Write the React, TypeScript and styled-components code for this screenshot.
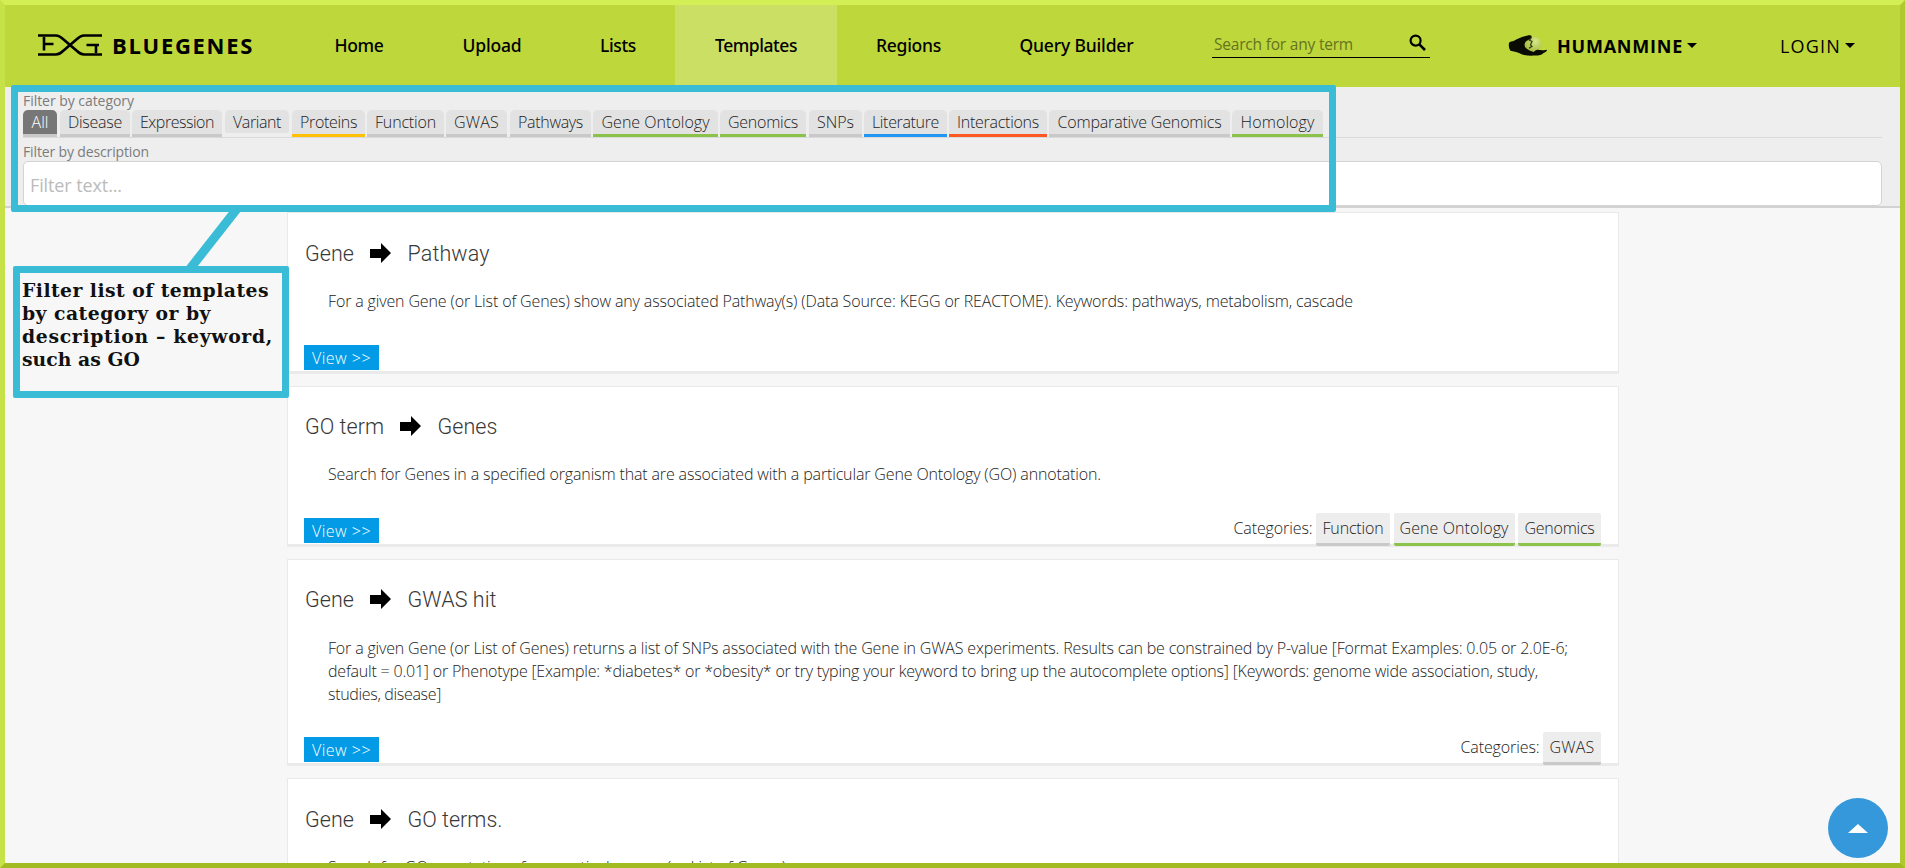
import React, { useLayoutEffect, useRef, useState } from "react";
import styled, { createGlobalStyle } from "styled-components";

const SANS = '"Open Sans", "Noto Sans", sans-serif';
const MEDIUM = '"Noto Sans", "Open Sans", sans-serif';

const GlobalStyle = createGlobalStyle`
  * { box-sizing: border-box; }
  body { margin: 0; font-family: ${SANS}; font-weight: 300; font-size: 16px; color: #222; }
`;

/* Spreads its letters so that the line takes exactly the given width. */
const FitSpan = styled.span`
  display: inline-block;
  white-space: pre;
`;

function Fit({ text, width }: { text: string; width: number }) {
  const ref = useRef<HTMLSpanElement>(null);
  const [spacing, setSpacing] = useState(0);
  useLayoutEffect(() => {
    if (!ref.current) return;
    const natural = ref.current.getBoundingClientRect().width - spacing * text.length;
    setSpacing((width - natural) / text.length);
  }, [text, width]);
  return (
    <FitSpan ref={ref} style={{ letterSpacing: spacing }}>
      {text}
    </FitSpan>
  );
}

const Page = styled.div`
  position: relative;
  width: 1905px;
  height: 868px;
  overflow: hidden;
  display: flex;
  flex-direction: column;
  background: #f7f7f7;
  border: 5px solid;
  border-color: #d4ef55 #afc92f #a2bb22 #c6e248;
`;

const Header = styled.header`
  flex: none;
  display: flex;
  align-items: flex-start;
  height: 82px;
  background: #bed73b;
  color: #000;
`;

const Brand = styled.div`
  display: flex;
  align-items: center;
  width: 290px;
  height: 79px;
  padding-left: 32px;
  font-size: 22px;
  font-weight: 700;
`;

const BrandLogo = styled.svg`
  width: 66px;
  height: 24px;
  margin: 1px 9px 0 0;
`;

const Nav = styled.nav`
  display: flex;
`;

const NavItem = styled.a<{ $width: number; $active?: boolean }>`
  display: flex;
  align-items: center;
  justify-content: center;
  width: ${(p) => p.$width}px;
  height: 80px;
  font-family: ${MEDIUM};
  font-size: 17.5px;
  font-weight: 500;
  background: ${(p) => (p.$active ? "#cbdf64" : "transparent")};
`;

const SearchBox = styled.div`
  display: flex;
  align-items: center;
  justify-content: space-between;
  width: 218px;
  height: 30px;
  margin: 23px 0 0 39px;
  padding: 3px 3px 0 2px;
  border-bottom: 1px solid #000;
  font-weight: 400;
  font-size: 15.5px;
  color: #65731f;
`;

const SearchIcon = styled.svg`
  width: 18px;
  height: 18px;
  margin-bottom: 3px;
`;

const MineMenu = styled.div`
  display: flex;
  align-items: center;
  height: 82px;
  margin-left: 78px;
  font-size: 18px;
  font-weight: 700;
`;

const HandLogo = styled.svg`
  width: 40px;
  height: 24px;
  margin-right: 9px;
`;

const LoginMenu = styled(MineMenu)`
  margin-left: 83px;
  font-weight: 400;
`;

const Caret = styled.i`
  margin: 0 0 2px 4px;
  border: 5px solid transparent;
  border-top-color: #000;
  border-bottom: 0;
`;

const FilterPanel = styled.section`
  flex: none;
  height: 121px;
  padding: 3px 18px 0;
  background: #eee;
  border-bottom: 2px solid #d2d2d2;
`;

const FilterLabel = styled.div`
  height: 20px;
  line-height: 21px;
  font-size: 14px;
  font-weight: 400;
  color: #7c7c7c;
`;

const Tabs = styled.div`
  display: flex;
  align-items: flex-start;
  height: 28px;
  margin-bottom: 3px;
  border-bottom: 1px solid #dadada;
`;

const Tab = styled.div<{ $width: number; $gap: number; $line?: string; $active?: boolean }>`
  display: flex;
  justify-content: center;
  width: ${(p) => p.$width}px;
  height: ${(p) => (p.$line ? 27 : 23)}px;
  margin-right: ${(p) => p.$gap}px;
  line-height: 24px;
  border-radius: 5px 5px ${(p) => (p.$line ? "0 0" : "2px 2px")};
  border-bottom: ${(p) => (p.$line ? `3px solid ${p.$line}` : "0")};
  background: ${(p) => (p.$active ? "#777" : "#e2e2e2")};
  color: ${(p) => (p.$active ? "#fff" : "#222")};
`;

const FilterInput = styled.div`
  height: 45px;
  padding: 2px 0 0 6px;
  line-height: 42px;
  border: 1px solid #d4d4d4;
  border-radius: 5px;
  background: #fff;
  font-size: 18px;
  font-weight: 400;
  color: #bbb;
`;

const TemplateList = styled.main`
  display: flex;
  flex-direction: column;
  gap: 12px;
  width: 1332px;
  margin: 4.45px 0 0 282px;
`;

const Card = styled.article`
  flex: none;
  padding: 25.5px 16px 0;
  background: #fff;
  border: 1px solid #e9e9e9;
  border-bottom: 3px solid #eaeaea;
`;

const CardTitle = styled.h4`
  display: flex;
  align-items: center;
  height: 29.2px;
  margin: 0;
  padding-left: 1px;
  font-family: Roboto, sans-serif;
  font-size: 21.5px;
  font-weight: 300;
  color: #383838;
`;

const ArrowIcon = styled.svg`
  width: 21px;
  height: 20px;
  margin: 0 17px 1px 15.5px;
`;

const Description = styled.div`
  display: flex;
  flex-direction: column;
  align-items: flex-start;
  margin-top: 22px;
  padding-left: 24px;
  line-height: 23px;
`;

const CardFooter = styled.div`
  display: flex;
  justify-content: space-between;
  align-items: flex-start;
  height: 26px;
  margin-top: 31.5px;
`;

const ViewButton = styled.button`
  width: 75px;
  height: 25px;
  padding: 0;
  border: 0;
  background: #039be5;
  color: #fff;
  font-family: ${SANS};
  font-size: 16px;
  font-weight: 300;
  line-height: 26px;
`;

const Categories = styled.div`
  display: flex;
  margin: -5px 1px 0 0;
  line-height: 30px;
`;

const Tag = styled.span<{ $width: number; $line: string }>`
  display: flex;
  justify-content: center;
  width: ${(p) => p.$width}px;
  height: 33px;
  margin-left: 3.5px;
  border-radius: 2px;
  border-bottom: 3px solid ${(p) => p.$line};
  background: #ededed;
`;

const Highlight = styled.div`
  position: absolute;
  left: 6px;
  top: 80px;
  width: 1325px;
  height: 127px;
  border: 7px solid #3bbcd6;
  border-radius: 2px;
`;

const Connector = styled.svg`
  position: absolute;
  left: 177px;
  top: 200px;
  width: 70px;
  height: 66px;
`;

const Callout = styled.div`
  position: absolute;
  left: 8px;
  top: 261px;
  width: 276px;
  height: 132px;
  padding: 6px 0 0 2px;
  border: 7px solid #3bbcd6;
  border-radius: 2px;
  font-family: "DejaVu Serif", serif;
  font-size: 18.8px;
  font-weight: 700;
  line-height: 23px;
  color: #111;
`;

const TopButton = styled.button`
  position: absolute;
  right: 12px;
  bottom: 5px;
  display: flex;
  align-items: center;
  justify-content: center;
  width: 60px;
  height: 60px;
  padding: 0;
  border: 0;
  border-radius: 50%;
  background: #3498db;
`;

const GREY = "#c9c9c9";
const GREEN = "#8bc34a";

const navItems = [
  { label: "Home", box: 128, text: 49 },
  { label: "Upload", box: 138, text: 59 },
  { label: "Lists", box: 114, text: 36 },
  { label: "Templates", box: 162, text: 82, active: true },
  { label: "Regions", box: 143, text: 65 },
  { label: "Query Builder", box: 193, text: 114 },
];

const tabs: { label: string; box: number; gap: number; line?: string; text: number; active?: boolean }[] = [
  { label: "All", box: 34, gap: 3, line: GREY, text: 17, active: true },
  { label: "Disease", box: 70, gap: 2, line: GREY, text: 54 },
  { label: "Expression", box: 90, gap: 3, line: GREY, text: 74 },
  { label: "Variant", box: 64, gap: 3, text: 48 },
  { label: "Proteins", box: 73, gap: 2, line: "#ffc107", text: 57 },
  { label: "Function", box: 77, gap: 2, line: GREY, text: 61 },
  { label: "GWAS", box: 61, gap: 3, line: GREY, text: 45 },
  { label: "Pathways", box: 81, gap: 2, line: GREY, text: 65 },
  { label: "Gene Ontology", box: 125, gap: 2, line: GREEN, text: 108 },
  { label: "Genomics", box: 86, gap: 3, line: GREEN, text: 70 },
  { label: "SNPs", box: 53, gap: 2, line: GREY, text: 37 },
  { label: "Literature", box: 83, gap: 2, line: "#2196f3", text: 67 },
  { label: "Interactions", box: 98, gap: 2, line: "#ff5722", text: 82 },
  { label: "Comparative Genomics", box: 181, gap: 2, line: GREY, text: 164 },
  { label: "Homology", box: 91, gap: 0, line: GREEN, text: 74 },
];

type Line = [string, number];
type CategoryTag = { label: string; box: number; text: number; line: string };

const cards: { from: Line; to: Line; lines: Line[]; tags: CategoryTag[] }[] = [
  {
    from: ["Gene", 49],
    to: ["Pathway", 82],
    lines: [["For a given Gene (or List of Genes) show any associated Pathway(s) (Data Source: KEGG or REACTOME). Keywords: pathways, metabolism, cascade", 1025]],
    tags: [],
  },
  {
    from: ["GO term", 79],
    to: ["Genes", 60],
    lines: [["Search for Genes in a specified organism that are associated with a particular Gene Ontology (GO) annotation.", 773]],
    tags: [
      { label: "Function", box: 74, text: 61, line: GREY },
      { label: "Gene Ontology", box: 121, text: 109, line: GREEN },
      { label: "Genomics", box: 83, text: 70, line: GREEN },
    ],
  },
  {
    from: ["Gene", 49],
    to: ["GWAS hit", 89],
    lines: [
      ["For a given Gene (or List of Genes) returns a list of SNPs associated with the Gene in GWAS experiments. Results can be constrained by P-value [Format Examples: 0.05 or 2.0E-6;", 1240],
      ["default = 0.01] or Phenotype [Example: *diabetes* or *obesity* or try typing your keyword to bring up the autocomplete options] [Keywords: genome wide association, study,", 1210],
      ["studies, disease]", 113],
    ],
    tags: [{ label: "GWAS", box: 58, text: 45, line: GREY }],
  },
  {
    from: ["Gene", 49],
    to: ["GO terms.", 95],
    lines: [["Search for GO annotations for a particular gene (or List of Genes)", 458]],
    tags: [],
  },
];

function TemplateCard({ card }: { card: (typeof cards)[number] }) {
  return (
    <Card>
      <CardTitle>
        <Fit text={card.from[0]} width={card.from[1]} />
        <ArrowIcon viewBox="0 0 21 20">
          <path d="M0 6h11V0l10 10-10 10v-5H0z" fill="#000" />
        </ArrowIcon>
        <Fit text={card.to[0]} width={card.to[1]} />
      </CardTitle>
      <Description>
        {card.lines.map(([text, width]) => (
          <Fit key={text} text={text} width={width} />
        ))}
      </Description>
      <CardFooter>
        <ViewButton>
          <Fit text="View >>" width={59} />
        </ViewButton>
        {card.tags.length > 0 && (
          <Categories>
            <Fit text="Categories:" width={79} />
            {card.tags.map((t) => (
              <Tag key={t.label} $width={t.box} $line={t.line}>
                <Fit text={t.label} width={t.text} />
              </Tag>
            ))}
          </Categories>
        )}
      </CardFooter>
    </Card>
  );
}

export default function App() {
  return (
    <>
      <GlobalStyle />
      <Page>
        <Header>
          <Brand>
            <BrandLogo viewBox="0 0 66 24" fill="none" stroke="#000" strokeWidth="2.6">
              <path d="M1 2.500h18c3 0 5 1.600 7 3.500l14 12c2 1.900 4 3.500 7 3.500h18" />
              <path d="M1 21.500h18c3 0 5-1.600 7-3.500l14-12c2-1.900 4-3.500 7-3.500h18" />
              <path d="M7 4v13.500M7 11h9.500M49.500 12H62M59 12v8" />
            </BrandLogo>
            <Fit text="BLUEGENES" width={142} />
          </Brand>
          <Nav>
            {navItems.map((n) => (
              <NavItem key={n.label} $width={n.box} $active={n.active}>
                <Fit text={n.label} width={n.text} />
              </NavItem>
            ))}
          </Nav>
          <SearchBox>
            <Fit text="Search for any term" width={139} />
            <SearchIcon viewBox="0 0 18 18" fill="none" stroke="#000">
              <circle cx="6.600" cy="6.600" r="5" strokeWidth="2.200" />
              <path d="M10.300 10.300l5.700 5.700" strokeWidth="2.600" />
            </SearchIcon>
          </SearchBox>
          <MineMenu>
            <HandLogo viewBox="0 0 40 24">
              <defs>
                <radialGradient id="globe" cx="0.65" cy="0.3" r="0.7">
                  <stop offset="0" stopColor="#d6e78a" />
                  <stop offset="1" stopColor="#a4bb40" />
                </radialGradient>
              </defs>
              <circle cx="25" cy="10.500" r="8" fill="url(#globe)" />
              <path
                d="M1 9C2 7 4 7.500 6 6.700C10 4.500 14 2.500 19 1.800C21 1.100 23 1.300 23.500 2.100C24 4.500 21 6 18.500 7C16 9 16 12.500 18.500 14.500C21 16.500 23 17 25.500 18C27 17 28 15.500 30 15.700C32 16 37 16.500 39 15.800C39 17.500 37 18.500 35.500 19C34 21 31 21.500 27 21.500C21 22 15 21.300 11 19C8 17.500 6 17.500 2.500 16.700C1 15 0.500 11.500 1 9Z"
                fill="#0a0c04"
              />
              <path d="M23.500 3l-2 3.500 2.500 .8-1.500 3.500 1.500 1.500-3 2" fill="none" stroke="#2f3a10" strokeWidth="1.200" />
            </HandLogo>
            <Fit text="HUMANMINE" width={126} />
            <Caret />
          </MineMenu>
          <LoginMenu>
            <Fit text="LOGIN" width={61} />
            <Caret />
          </LoginMenu>
        </Header>

        <FilterPanel>
          <FilterLabel>
            <Fit text="Filter by category" width={111} />
          </FilterLabel>
          <Tabs>
            {tabs.map((t) => (
              <Tab key={t.label} $width={t.box} $gap={t.gap} $line={t.line} $active={t.active}>
                <Fit text={t.label} width={t.text} />
              </Tab>
            ))}
          </Tabs>
          <FilterLabel>
            <Fit text="Filter by description" width={126} />
          </FilterLabel>
          <FilterInput>
            <Fit text="Filter text..." width={92} />
          </FilterInput>
        </FilterPanel>

        <TemplateList>
          {cards.map((c, i) => (
            <TemplateCard key={i} card={c} />
          ))}
        </TemplateList>

        <Highlight />
        <Connector viewBox="0 0 70 66">
          <path d="M58 0L7 65" stroke="#3bbcd6" strokeWidth="9" />
        </Connector>
        <Callout>
          <Fit text="Filter list of templates" width={247} />
          <Fit text="by category or by" width={189} />
          <br />
          <Fit text="description – keyword," width={251} />
          <Fit text="such as GO" width={118} />
        </Callout>
        <TopButton>
          <svg width="20" height="9" viewBox="0 0 20 9">
            <path d="M10 0l10 9H0z" fill="#fff" />
          </svg>
        </TopButton>
      </Page>
    </>
  );
}
